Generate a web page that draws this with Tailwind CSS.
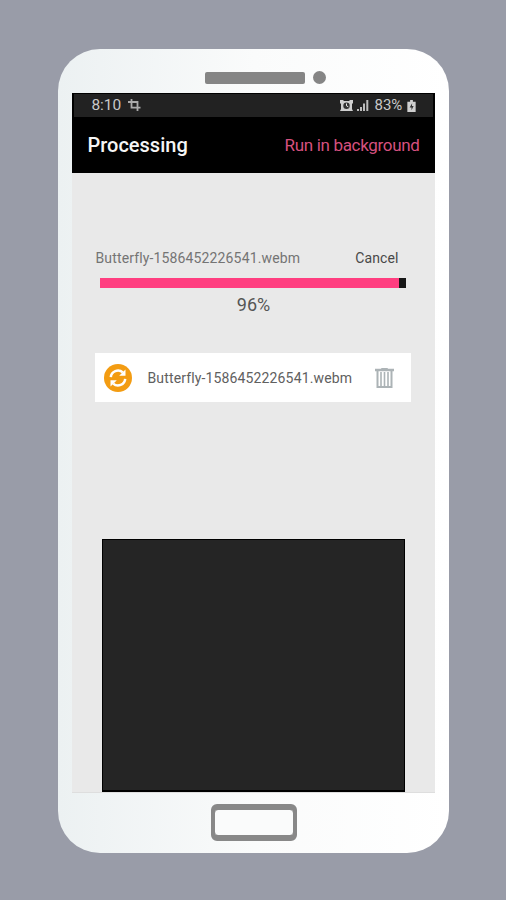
<!DOCTYPE html>
<html lang="en">
<head>
<meta charset="utf-8">
<title>Processing</title>
<script src="https://cdn.jsdelivr.net/npm/@tailwindcss/browser@4"></script>
</head>
<body class="w-[506px] h-[900px] overflow-hidden bg-[#999ca8] pt-[49px] pl-[58px] font-['Roboto',sans-serif]">
<main class="w-[391px] h-[804px] rounded-[42px] bg-linear-to-r from-[#ecf1f2] via-[#fafbfb] to-white flex flex-col items-center">
  <div class="h-[44px] w-full shrink-0 flex items-start pt-[22px] pl-[147px]">
    <span class="w-[100px] h-[12px] mt-px rounded-[2px] bg-[#858585]"></span>
    <span class="w-[13px] h-[13px] ml-[8px] rounded-full bg-[#858585]"></span>
  </div>
  <section class="w-[363px] h-[700px] shrink-0 bg-[#e9e9e9] flex flex-col mr-px border-b border-[#dedede]">
    <div class="h-[24px] shrink-0 bg-[#222] border-t border-x-2 border-black flex items-center text-[#c9c9c9] pl-[18px] pr-[17px]">
      <span class="text-[15.5px] tracking-[-0.1px] leading-none w-[30px] whitespace-nowrap">8:10</span>
      <svg class="ml-[6px] w-[13px] h-[13px]" viewBox="0 0 13 13" fill="none" stroke="#aaa" stroke-width="1.8"><path d="M3.5 0v8.6H12.5M0 3h9.5v9"/></svg>
      <svg class="ml-auto w-[13px] h-[13px]" viewBox="0 0 13 13"><path d="M0 1h3l1 1h5l1-1h3v3l-1 1v5l1 2H0l1-2V5L0 4z" fill="#d0d0d0"/><circle cx="6.5" cy="6.7" r="3.2" fill="#333"/><path d="M6.5 4.5v2.3l1.8 1" stroke="#eee" fill="none"/></svg>
      <svg class="ml-[4px] w-[12px] h-[13px]" viewBox="0 0 12 13" fill="#bcbcbc"><path d="M0 10h2v2H0zM3 8h2v4H3zM6 4.5h2V12H6zM9.3 1h2v11h-2z"/></svg>
      <span class="ml-[6px] text-[15px] leading-none w-[28px] whitespace-nowrap">83%</span>
      <svg class="ml-[4px] w-[9px] h-[12px]" viewBox="0 0 9 13"><path d="M3 0h3v2h3v11H0V2h3z" fill="#d0d0d0"/><path d="M5.2 3.5 2.5 8h2v3l2.3-4.5H5z" fill="#333"/></svg>
    </div>
    <header class="h-[56px] shrink-0 bg-black flex items-center justify-between pl-[16px] pr-[15px]">
      <h1 class="text-[20px] font-medium text-[#f5f5f5] leading-none">Processing</h1>
      <span class="text-[17px] tracking-[-0.33px] text-[#d5517f] leading-none whitespace-nowrap">Run in background</span>
    </header>
    <div class="mt-[76px] h-[18px] shrink-0 pl-[24px] pr-[36px] flex items-center justify-between leading-none">
      <span class="text-[14px] tracking-[0.14px] text-[#747474] whitespace-nowrap">Butterfly-1586452226541.webm</span>
      <span class="text-[14px] tracking-[0.1px] text-[#484848]">Cancel</span>
    </div>
    <div class="mt-[11px] ml-[28px] w-[306px] h-[10px] shrink-0 flex bg-[#171717]"><span class="w-[299px] bg-[#ff3e80]"></span></div>
    <div class="mt-[8px] h-[18px] leading-[18px] pl-px text-center text-[18px] text-[#555] shrink-0">96%</div>
    <div class="mt-[39px] ml-[23px] w-[316px] h-[49px] shrink-0 bg-white flex items-center pl-[9px] pr-[17px]">
      <svg class="w-[28px] h-[28px] shrink-0" viewBox="0 0 28 28"><circle cx="14" cy="14" r="14" fill="#f39c12"/><g fill="none" stroke="#fff" stroke-width="2.5"><path d="M6.8 13.2a7.2 7.2 0 0 1 12-4.8"/><path d="M21.2 14.8a7.2 7.2 0 0 1-12 4.8"/></g><path d="M21.5 5.5v6.3h-6.3zM6.5 22.5v-6.3h6.3z" fill="#fff"/></svg>
      <span class="ml-[16px] text-[14px] tracking-[0.14px] leading-none text-[#606060] whitespace-nowrap">Butterfly-1586452226541.webm</span>
      <svg class="ml-auto w-[19px] h-[20px] shrink-0" viewBox="0 0 19 20" fill="none" stroke="#acb3b6"><path d="M0 2h19" stroke-width="2.5"/><path d="M6.5 1V.5h6V1" stroke-width="1"/><path d="M2.5 3v16h14V3" stroke-width="2"/><path d="M6 4v14M9.5 4v14M13 4v14" stroke-width="1.6"/></svg>
    </div>
    <div class="mt-[137px] ml-[30px] w-[303px] h-[253px] shrink-0 bg-[#252525] border border-b-2 border-black"></div>
  </section>
  <div class="mt-[11px] ml-px w-[86px] h-[37px] rounded-[6px] border-x-[4px] border-y-[6px] border-[#888] flex"><span class="grow bg-[#fafbfb] rounded-[3px] outline-1 outline-[#888]"></span></div>
</main>
</body>
</html>
